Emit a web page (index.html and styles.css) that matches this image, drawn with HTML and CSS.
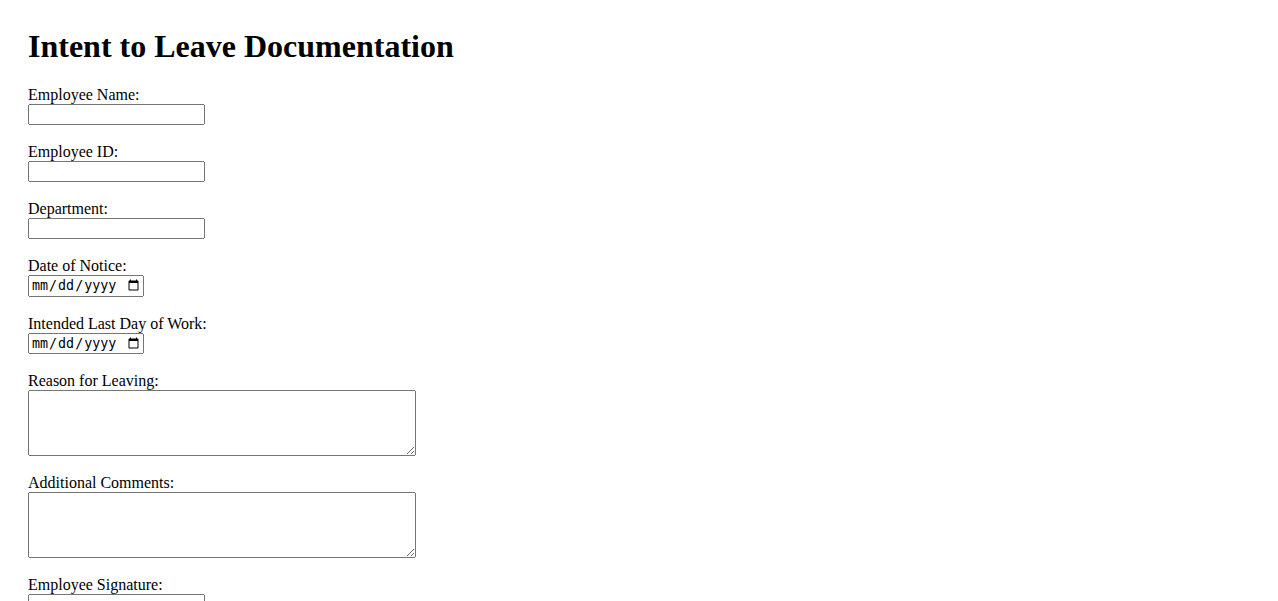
FILE: index.html
```html
<!DOCTYPE html>
<html lang="en">
<head>
<meta charset="utf-8">
<title>Intent to Leave Documentation</title>
<link rel="stylesheet" href="styles.css">
</head>
<body>
<main class="page">
  <h1 class="title">Intent to Leave Documentation</h1>
  <form class="form">
    <div class="field">
      <label for="name">Employee Name:</label>
      <input class="text-input" type="text" id="name">
    </div>
    <div class="field">
      <label for="eid">Employee ID:</label>
      <input class="text-input" type="text" id="eid">
    </div>
    <div class="field">
      <label for="dept">Department:</label>
      <input class="text-input" type="text" id="dept">
    </div>
    <div class="field">
      <label for="notice">Date of Notice:</label>
      <input class="date-input" type="date" id="notice">
    </div>
    <div class="field">
      <label for="lastday">Intended Last Day of Work:</label>
      <input class="date-input" type="date" id="lastday">
    </div>
    <div class="field">
      <label for="reason">Reason for Leaving:</label>
      <textarea class="area" id="reason"></textarea>
    </div>
    <div class="field">
      <label for="comments">Additional Comments:</label>
      <textarea class="area" id="comments"></textarea>
    </div>
    <div class="field">
      <label for="sig">Employee Signature:</label>
      <input class="text-input" type="text" id="sig">
    </div>
    <div class="field">
      <label for="sigdate">Date:</label>
      <input class="date-input" type="date" id="sigdate">
    </div>
  </form>
</main>
</body>
</html>
```

FILE: styles.css
```css
html, body {
  margin: 0;
  padding: 0;
  background: #ffffff;
}

body {
  font-family: "Liberation Serif", "Times New Roman", serif;
  font-size: 16px;
  color: #000000;
}

.page {
  padding: 28px;
}

.title {
  margin: 0 0 21px;
  font-size: 32px;
  font-weight: bold;
  line-height: 37px;
}

.form {
  display: flex;
  flex-direction: column;
}

.field {
  display: flex;
  flex-direction: column;
  align-items: flex-start;
  margin-bottom: 18px;
}

.field label {
  line-height: 18px;
}

.text-input {
  box-sizing: border-box;
  width: 177px;
  height: 21px;
  margin: 0;
}

.date-input {
  box-sizing: border-box;
  width: 116px;
  height: 21.5px;
  margin: 0;
}

.area {
  box-sizing: border-box;
  width: 388px;
  height: 66px;
  margin: 0;
}
```
